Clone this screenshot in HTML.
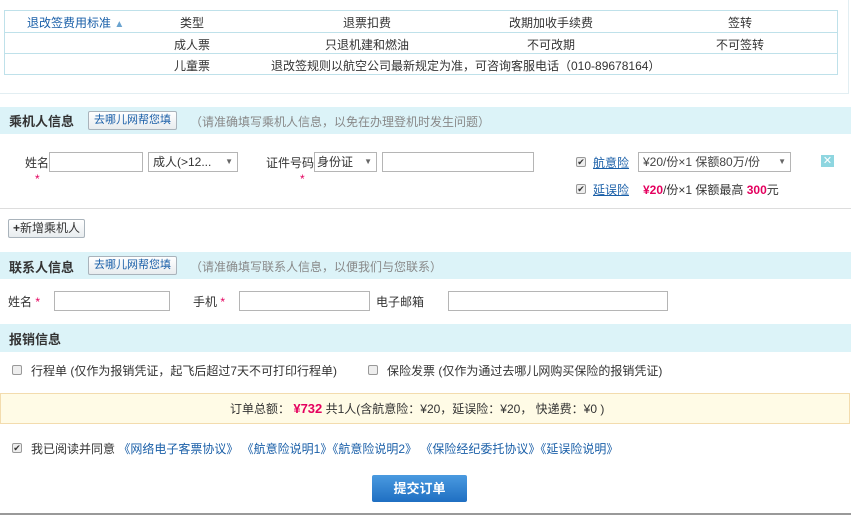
<!DOCTYPE html>
<html><head><meta charset="utf-8"><style>
*{margin:0;padding:0;box-sizing:border-box}
body{width:851px;height:515px;position:relative;background:#fff;font:12px "Liberation Sans","Noto Sans CJK SC",sans-serif;color:#333;overflow:hidden}
.a{position:absolute;white-space:nowrap}
.c{position:absolute;text-align:center}
.inp{position:absolute;border:1px solid #b5b5b5;height:20px;background:#fff}
.bar{position:absolute;left:0;width:851px;background:#dcf3f8}
.bar b{position:absolute;left:9px;font-size:13px;color:#333}
.btn{position:absolute;border:1px solid #a9b3bb;border-radius:2px;background:linear-gradient(#fff,#e8ecef);color:#1a5fa8;font-size:11px;height:19px;line-height:17px;padding:0 5px}
.tip{position:absolute;color:#888}
.star{color:#e4005e}
.cb{position:absolute;width:10px;height:10px;border:1px solid #999;border-radius:2px;background:#eee;font-size:9px;line-height:8px;text-align:center;color:#333}
.lnk{color:#1a5fa8}
</style></head><body>
<div class="a" style="left:0;top:0;width:849px;height:94px;border-right:1px solid #e2eef2;border-bottom:1px solid #e2eef2"></div>
<div class="a" style="left:4px;top:10px;width:834px;height:65px;border:1px solid #bfe1ea"></div>
<div class="a" style="left:4px;top:32px;width:834px;border-top:1px solid #bfe1ea"></div>
<div class="a" style="left:4px;top:53px;width:834px;border-top:1px solid #bfe1ea"></div>
<div class="a lnk" style="left:27px;top:14px">退改签费用标准 <span style="font-size:10px;color:#6aa3cf">&#9650;</span></div>
<div class="c" style="left:150px;width:84px;top:14px">类型</div>
<div class="c" style="left:300px;width:134px;top:14px">退票扣费</div>
<div class="c" style="left:480px;width:142px;top:14px">改期加收手续费</div>
<div class="c" style="left:700px;width:80px;top:14px">签转</div>
<div class="c" style="left:150px;width:84px;top:36px">成人票</div>
<div class="c" style="left:300px;width:134px;top:36px">只退机建和燃油</div>
<div class="c" style="left:480px;width:142px;top:36px">不可改期</div>
<div class="c" style="left:700px;width:80px;top:36px">不可签转</div>
<div class="c" style="left:150px;width:84px;top:57px">儿童票</div>
<div class="a" style="left:271px;top:57px">退改签规则以航空公司最新规定为准，可咨询客服电话（010-89678164）</div>

<div class="bar" style="top:107px;height:27px"><b style="top:4px">乘机人信息</b></div>
<div class="btn" style="left:88px;top:111px">去哪儿网帮您填</div>
<div class="tip" style="left:190px;top:113px">（请准确填写乘机人信息，以免在办理登机时发生问题）</div>

<div class="a" style="left:25px;top:154px">姓名</div>
<div class="inp" style="left:49px;top:152px;width:94px"></div>
<div class="a star" style="left:35px;top:172px">*</div>
<div class="inp" style="left:148px;top:152px;width:90px;padding-left:4px;line-height:18px">成人(&gt;12...<span style="position:absolute;right:4px;font-size:8px;color:#666">▼</span></div>
<div class="a" style="left:266px;top:154px">证件号码</div>
<div class="inp" style="left:314px;top:152px;width:63px;padding-left:2px;line-height:18px">身份证<span style="position:absolute;right:4px;font-size:8px;color:#666">▼</span></div>
<div class="a star" style="left:300px;top:172px">*</div>
<div class="inp" style="left:382px;top:152px;width:152px"></div>
<div class="cb" style="left:576px;top:157px">✔</div>
<div class="a lnk" style="left:593px;top:154px;text-decoration:underline">航意险</div>
<div class="inp" style="left:638px;top:152px;width:153px;padding-left:4px;line-height:18px;color:#444">¥20/份×1 保额80万/份<span style="position:absolute;right:4px;font-size:8px;color:#666">▼</span></div>
<div class="a" style="left:821px;top:155px;width:13px;height:12px;background:#8ed6e0;color:#fff;font-size:11px;line-height:12px;text-align:center">✕</div>
<div class="cb" style="left:576px;top:184px">✔</div>
<div class="a lnk" style="left:593px;top:181px;text-decoration:underline">延误险</div>
<div class="a" style="left:643px;top:181px"><span class="star" style="font-weight:bold">¥20</span>/份×1 保额最高 <span class="star" style="font-weight:bold">300</span>元</div>
<div class="a" style="left:0;top:208px;width:851px;border-top:1px solid #ddd"></div>
<div class="btn" style="left:8px;top:219px;color:#333;font-size:12px;height:19px;padding:0 4px"><b>+</b>新增乘机人</div>

<div class="bar" style="top:252px;height:27px"><b style="top:5px">联系人信息</b></div>
<div class="btn" style="left:88px;top:256px">去哪儿网帮您填</div>
<div class="tip" style="left:190px;top:258px">（请准确填写联系人信息，以便我们与您联系）</div>
<div class="a" style="left:8px;top:293px">姓名 <span class="star">*</span></div>
<div class="inp" style="left:54px;top:291px;width:116px"></div>
<div class="a" style="left:193px;top:293px">手机 <span class="star">*</span></div>
<div class="inp" style="left:239px;top:291px;width:131px"></div>
<div class="a" style="left:376px;top:293px">电子邮箱</div>
<div class="inp" style="left:448px;top:291px;width:220px"></div>

<div class="bar" style="top:324px;height:28px"><b style="top:5px">报销信息</b></div>
<div class="cb" style="left:12px;top:365px"></div>
<div class="a" style="left:31px;top:362px">行程单 (仅作为报销凭证，起飞后超过7天不可打印行程单)</div>
<div class="cb" style="left:368px;top:365px"></div>
<div class="a" style="left:387px;top:362px">保险发票 (仅作为通过去哪儿网购买保险的报销凭证)</div>

<div class="a" style="left:0;top:393px;width:850px;height:31px;background:#fffbe6;border:1px solid #f3dcae"></div>
<div class="a" style="left:230px;top:400px">订单总额： <span class="star" style="font-weight:bold;font-size:13px">¥732</span> 共1人(含航意险：¥20，延误险：¥20， 快递费：¥0 )</div>

<div class="cb" style="left:12px;top:443px">✔</div>
<div class="a" style="left:31px;top:440px">我已阅读并同意 <span class="lnk">《网络电子客票协议》 《航意险说明1》《航意险说明2》 《保险经纪委托协议》《延误险说明》</span></div>
<div class="a" style="left:372px;top:475px;width:95px;height:27px;background:linear-gradient(#4a9ae0,#1f6fc2);border-radius:2px;color:#fff;font-weight:bold;font-size:13px;text-align:center;line-height:27px">提交订单</div>
<div class="a" style="left:0;top:513px;width:851px;border-top:2px solid #999"></div>
</body></html>
